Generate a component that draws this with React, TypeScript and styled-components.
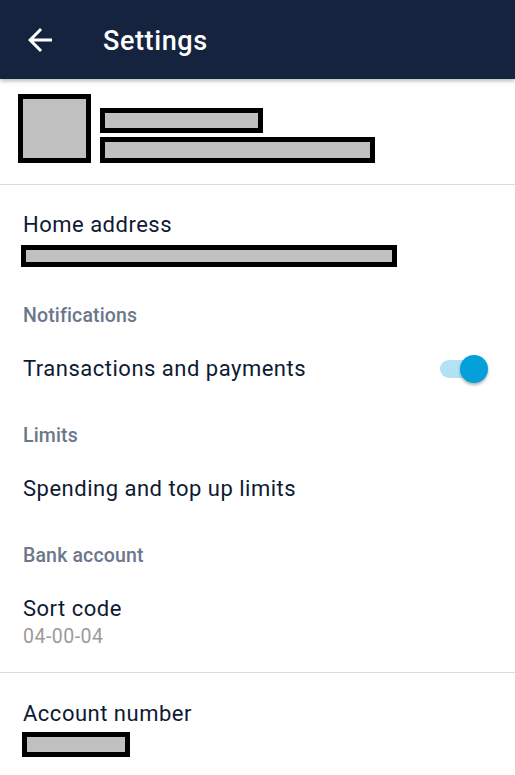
import React from "react";
import styled, { createGlobalStyle } from "styled-components";

const Global = createGlobalStyle`
  html, body { margin: 0; padding: 0; background: #ffffff; }
  body { font-family: Roboto, "Noto Sans", Arial, sans-serif; -webkit-font-smoothing: antialiased; }
  * { box-sizing: border-box; }
`;

const Page = styled.div`
  width: 515px;
  min-height: 775px;
  background: #fff;
  overflow: hidden;
`;

const Header = styled.header`
  position: relative;
  z-index: 2;
  height: 79px;
  background: #16233f;
  display: flex;
  align-items: center;
  padding-left: 22px;
  box-shadow: 0 2px 4px rgba(0, 0, 0, 0.28);
`;

const BackIcon = styled.svg`
  width: 36px;
  height: 36px;
  fill: #ffffff;
  flex: none;
`;

const Title = styled.h1`
  margin: 2px 0 0 45px;
  font-family: Roboto, sans-serif;
  font-weight: 500;
  font-size: 27px;
  color: #ffffff;
  letter-spacing: 0.6px;
`;

const Profile = styled.section`
  display: flex;
  align-items: flex-start;
  gap: 9px;
  padding: 15px 18px 21px;
  border-bottom: 1px solid #dcdcdc;
`;

const Redact = styled.div<{ $w: number; $h: number }>`
  width: ${(p) => p.$w}px;
  height: ${(p) => p.$h}px;
  background: #c0c0c0;
  border: 5px solid #000;
  flex: none;
`;

const ProfileLines = styled.div`
  display: flex;
  flex-direction: column;
  gap: 4px;
  padding-top: 14px;
`;

const Item = styled.div<{ $pt: number; $pb: number }>`
  padding: ${(p) => p.$pt}px 23px ${(p) => p.$pb}px;
  display: flex;
  flex-direction: column;
`;

const ItemRow = styled.div`
  padding: 13px 27px 13px 23px;
  display: flex;
  align-items: center;
  justify-content: space-between;
`;

const Label = styled.div`
  font-size: 22px;
  line-height: 28px;
  color: #0e1a33;
  letter-spacing: 0.5px;
`;

const Value = styled.div`
  font-size: 19.5px;
  line-height: 24px;
  color: #9b9b9b;
  letter-spacing: 0.5px;
  margin-top: 2px;
`;

const SectionHeader = styled.div`
  padding: 28px 23px 14px;
  font-size: 19.5px;
  line-height: 24px;
  font-weight: 500;
  color: #6b778a;
  letter-spacing: 0.15px;
`;

const Divider = styled.hr`
  margin: 0;
  border: 0;
  border-top: 1px solid #dcdcdc;
`;

const Toggle = styled.div`
  position: relative;
  width: 48px;
  height: 28px;
  flex: none;
`;

const Track = styled.div`
  position: absolute;
  left: 0;
  right: 4px;
  top: 5px;
  height: 18px;
  border-radius: 9px;
  background: #b3e2f5;
`;

const Thumb = styled.div`
  position: absolute;
  right: 0;
  top: 0;
  width: 28px;
  height: 28px;
  border-radius: 50%;
  background: #04a0da;
  box-shadow: 0 2px 3px rgba(0, 0, 0, 0.3);
`;

const Spacer = styled.div<{ $h: number }>`
  height: ${(p) => p.$h}px;
  flex: none;
`;

const AddressBar = styled(Redact)`
  margin-left: -2px;
`;

const AccountBar = styled(Redact)`
  margin-left: -1px;
`;

export default function App() {
  return (
    <Page>
      <Global />
      <Header>
        <BackIcon viewBox="0 0 24 24">
          <path d="M20 11H7.83l5.59-5.59L12 4l-8 8 8 8 1.41-1.41L7.83 13H20v-2z" />
        </BackIcon>
        <Title>Settings</Title>
      </Header>
      <Profile>
        <Redact $w={73} $h={69} />
        <ProfileLines>
          <Redact $w={163} $h={25} />
          <Redact $w={275} $h={26} />
        </ProfileLines>
      </Profile>
      <Item $pt={26} $pb={9}>
        <Label>Home address</Label>
        <Spacer $h={6} />
        <AddressBar $w={376} $h={22} />
      </Item>
      <SectionHeader>Notifications</SectionHeader>
      <ItemRow>
        <Label>Transactions and payments</Label>
        <Toggle>
          <Track />
          <Thumb />
        </Toggle>
      </ItemRow>
      <SectionHeader>Limits</SectionHeader>
      <ItemRow>
        <Label>Spending and top up limits</Label>
      </ItemRow>
      <SectionHeader>Bank account</SectionHeader>
      <Item $pt={13} $pb={23}>
        <Label>Sort code</Label>
        <Value>04-00-04</Value>
      </Item>
      <Divider />
      <Item $pt={27} $pb={20}>
        <Label>Account number</Label>
        <Spacer $h={4} />
        <AccountBar $w={108} $h={25} />
      </Item>
    </Page>
  );
}
